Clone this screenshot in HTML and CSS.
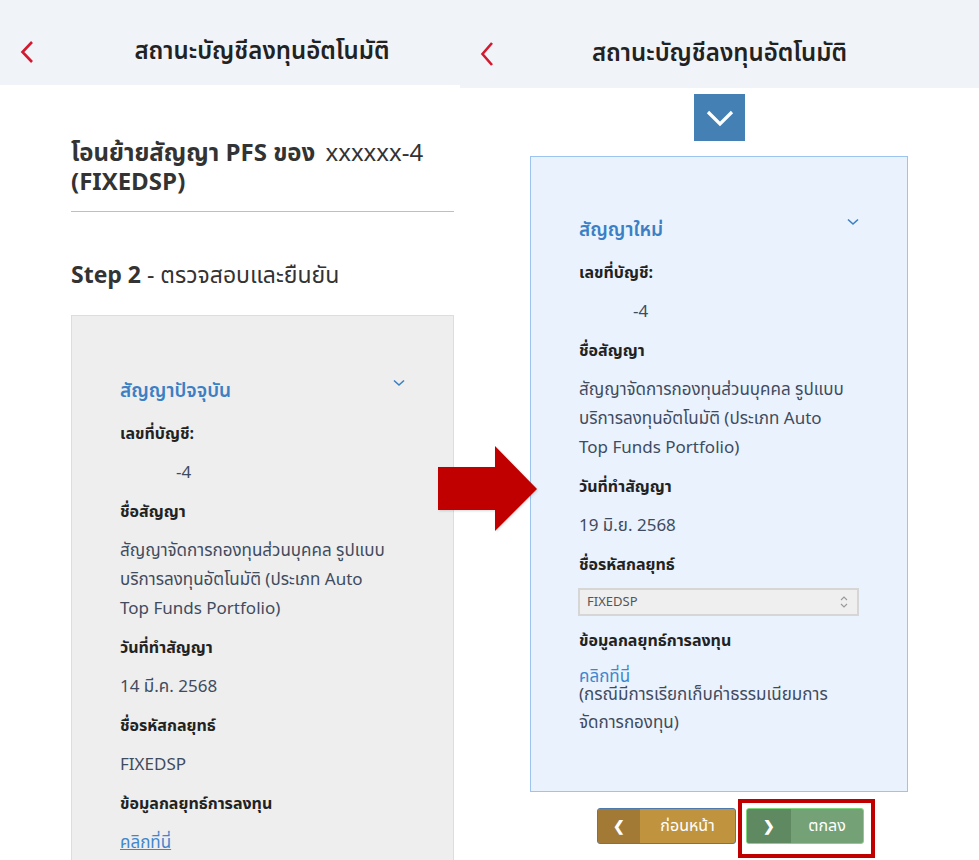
FILE: index.html
```html
<!DOCTYPE html>
<html lang="th">
<head>
    <meta charset="UTF-8">
    <meta name="viewport" content="width=device-width, initial-scale=1.0">
    <title>สถานะบัญชีลงทุนอัตโนมัติ</title>
    <link rel="stylesheet" href="styles.css">
</head>
<body>
    <div class="board">
        <section class="phone phone-left">
            <header class="topbar">
                <svg class="back" width="14" height="24" viewBox="0 0 14 24"><path d="M12 2 L2.5 12 L12 22" fill="none" stroke="#d2192f" stroke-width="2.6"/></svg>
                <h1>สถานะบัญชีลงทุนอัตโนมัติ</h1>
            </header>
            <div class="content">
                <h2 class="transfer-title">โอนย้ายสัญญา PFS ของ <span class="acct">xxxxxx-4</span><br>(FIXEDSP)</h2>
                <hr class="divider">
                <h3 class="step"><b>Step 2</b> - ตรวจสอบและยืนยัน</h3>
                <div class="card card-gray">
                    <div class="card-head">
                        <span class="card-title">สัญญาปัจจุบัน</span>
                        <svg class="caret" width="12" height="8" viewBox="0 0 12 8"><path d="M1 1.5 L6 6 L11 1.5" fill="none" stroke="#3b7fc4" stroke-width="1.6"/></svg>
                    </div>
                    <div class="label">เลขที่บัญชี:</div>
                    <div class="value"><span class="mask"></span>-4</div>
                    <div class="label">ชื่อสัญญา</div>
                    <div class="value">สัญญาจัดการกองทุนส่วนบุคคล รูปแบบ<br>บริการลงทุนอัตโนมัติ (ประเภท Auto<br>Top Funds Portfolio)</div>
                    <div class="label">วันที่ทำสัญญา</div>
                    <div class="value">14 มี.ค. 2568</div>
                    <div class="label">ชื่อรหัสกลยุทธ์</div>
                    <div class="value">FIXEDSP</div>
                    <div class="label">ข้อมูลกลยุทธ์การลงทุน</div>
                    <a class="link underline" href="#">คลิกที่นี่</a>
                </div>
            </div>
        </section>

        <section class="phone phone-right">
            <header class="topbar topbar-center">
                <svg class="back" width="14" height="26" viewBox="0 0 14 26"><path d="M12 2 L2.5 13 L12 24" fill="none" stroke="#d2192f" stroke-width="2.6"/></svg>
                <h1>สถานะบัญชีลงทุนอัตโนมัติ</h1>
            </header>
            <div class="toggle-row">
                <button class="toggle">
                    <svg width="28" height="18" viewBox="0 0 28 18"><path d="M2 3 L14 15 L26 3" fill="none" stroke="#fff" stroke-width="3.2"/></svg>
                </button>
            </div>
            <div class="card card-blue">
                <div class="card-head">
                    <span class="card-title">สัญญาใหม่</span>
                    <svg class="caret" width="12" height="8" viewBox="0 0 12 8"><path d="M1 1.5 L6 6 L11 1.5" fill="none" stroke="#3b7fc4" stroke-width="1.6"/></svg>
                </div>
                <div class="label">เลขที่บัญชี:</div>
                <div class="value"><span class="mask mask-short"></span>-4</div>
                <div class="label">ชื่อสัญญา</div>
                <div class="value">สัญญาจัดการกองทุนส่วนบุคคล รูปแบบ<br>บริการลงทุนอัตโนมัติ (ประเภท Auto<br>Top Funds Portfolio)</div>
                <div class="label">วันที่ทำสัญญา</div>
                <div class="value">19 มิ.ย. 2568</div>
                <div class="label">ชื่อรหัสกลยุทธ์</div>
                <div class="select">
                    <span>FIXEDSP</span>
                    <svg width="10" height="14" viewBox="0 0 10 14"><path d="M2 5 L5 2 L8 5 M2 9 L5 12 L8 9" fill="none" stroke="#999" stroke-width="1.1"/></svg>
                </div>
                <div class="label">ข้อมูลกลยุทธ์การลงทุน</div>
                <a class="link link-tight" href="#">คลิกที่นี่</a>
                <div class="value note">(กรณีมีการเรียกเก็บค่าธรรมเนียมการ<br>จัดการกองทุน)</div>
            </div>
            <div class="actions">
                <button class="btn btn-prev"><span class="btn-icon">&#10094;</span><span class="btn-text">ก่อนหน้า</span></button>
                <div class="highlight-wrap">
                    <button class="btn btn-ok"><span class="btn-icon">&#10095;</span><span class="btn-text">ตกลง</span></button>
                    <div class="highlight"></div>
                </div>
            </div>
        </section>

        <svg class="arrow" width="100" height="86" viewBox="0 0 100 86">
            <path d="M0 21 H57 V0 L99 43 L57 85 V64 H0 Z" fill="#c00000"/>
        </svg>
    </div>
</body>
</html>
```

FILE: styles.css
```css
body {
    margin: 0;
    padding: 0;
    background-color: #fff;
    font-family: "Noto Sans Thai", "Noto Sans", "Open Sans", sans-serif;
    color: #222;
    overflow: hidden;
}

.board {
    position: relative;
    display: flex;
    width: 979px;
    height: 860px;
    overflow: hidden;
}

.phone {
    display: flex;
    flex-direction: column;
    flex-shrink: 0;
    background-color: #fff;
}

.phone > * {
    flex-shrink: 0;
}

.phone-left {
    width: 460px;
}

.phone-right {
    width: 519px;
}

.topbar {
    box-sizing: border-box;
    display: flex;
    align-items: center;
    height: 85px;
    padding: 18px 0 0 20px;
    background-color: #f0f3f8;
}

.topbar h1 {
    flex: 1;
    margin: 0;
    padding-left: 30px;
    text-align: center;
    font-size: 24px;
    font-weight: 600;
    color: #222;
}

.topbar-center {
    position: relative;
    height: 88px;
    justify-content: center;
    padding: 20px 0 0 0;
}

.topbar-center .back {
    position: absolute;
    left: 20px;
    top: 41px;
}

.topbar-center h1 {
    flex: none;
    padding-left: 0;
}

.content {
    padding: 55px 6px 0 71px;
}

.transfer-title {
    margin: 0;
    font-size: 24px;
    line-height: 29px;
    font-weight: 700;
    color: #333;
}

.acct {
    font-weight: 400;
    margin-left: 4px;
}

.divider {
    margin: 13px 0 0;
    border: none;
    border-top: 1px solid #b9bed1;
}

.step {
    margin: 47px 0 0;
    font-size: 23px;
    font-weight: 400;
    color: #333;
}

.step b {
    font-weight: 700;
}

.card {
    box-sizing: border-box;
    padding: 57px 48px 30px 48px;
}

.card-gray {
    margin-top: 22px;
    height: 560px;
    background-color: #eeeeee;
    border: 1px solid #dddddd;
}

.card-gray .card-head {
    padding-top: 2px;
    margin-bottom: 11px;
}

.card-blue {
    width: 378px;
    height: 636px;
    margin: 15px 0 0 70px;
    padding: 57px 48px 30px 48px;
    background-color: #eaf2fd;
    border: 1px solid #9cc4ef;
}

.card-head {
    display: flex;
    justify-content: space-between;
    align-items: flex-start;
    margin-bottom: 11px;
}

.card-title {
    font-size: 19px;
    line-height: 34px;
    font-weight: 600;
    color: #3b7fc4;
}

.caret {
    margin-top: 4px;
}

.label {
    font-size: 16px;
    line-height: 29px;
    font-weight: 700;
    color: #222;
    margin-bottom: 10px;
}

.value {
    font-size: 17px;
    line-height: 29px;
    color: #3f4b5e;
    margin-bottom: 10px;
}

.mask {
    display: inline-block;
    width: 56px;
}

.mask-short {
    width: 54px;
}

.link {
    display: block;
    font-size: 17px;
    line-height: 29px;
    color: #3f86cc;
    text-decoration: none;
}

.underline {
    text-decoration: underline;
}

.link-tight {
    line-height: 14px;
    margin-top: 14px;
}

.note {
    line-height: 28px;
    margin-top: -3px;
}

.select {
    box-sizing: border-box;
    display: flex;
    justify-content: space-between;
    align-items: center;
    height: 28px;
    margin: -2px 0 11px -1px;
    padding: 0 8px 0 7px;
    background-color: #efefef;
    border: 2px solid #d6d6d6;
    font-size: 13px;
    color: #555;
}

.toggle-row {
    display: flex;
    justify-content: center;
    padding-top: 6px;
}

.toggle {
    display: flex;
    align-items: center;
    justify-content: center;
    width: 51px;
    height: 47px;
    border: none;
    padding: 0;
    background-color: #4580b5;
}

.actions {
    display: flex;
    gap: 10px;
    margin: 16px 0 0 137px;
}

.btn {
    display: flex;
    align-items: stretch;
    height: 36px;
    padding: 0;
    border-radius: 3px;
    overflow: hidden;
    font-family: "Noto Sans Thai", "Noto Sans", sans-serif;
    font-size: 16px;
    color: #fff;
    cursor: pointer;
}

.btn-icon {
    display: flex;
    align-items: center;
    justify-content: center;
    font-size: 14px;
    font-weight: 700;
}

.btn-text {
    flex: 1;
    display: flex;
    align-items: center;
    justify-content: center;
}

.btn-prev {
    width: 139px;
    background-color: #c0943f;
    border: 1px solid #4d79ad;
}

.btn-prev .btn-icon {
    width: 42px;
    background-color: #a27a35;
}

.btn-ok {
    width: 118px;
    background-color: #74a276;
    border: 1px solid #7fd67f;
}

.btn-ok .btn-icon {
    width: 44px;
    background-color: #5f8a61;
}

.highlight-wrap {
    position: relative;
}

.highlight {
    position: absolute;
    left: -8px;
    top: -9px;
    width: 137px;
    height: 59px;
    box-sizing: border-box;
    border: 4px solid #c00000;
}

.arrow {
    position: absolute;
    left: 438px;
    top: 446px;
    filter: drop-shadow(1px 1px 1px rgba(0, 0, 0, 0.15));
}
```
